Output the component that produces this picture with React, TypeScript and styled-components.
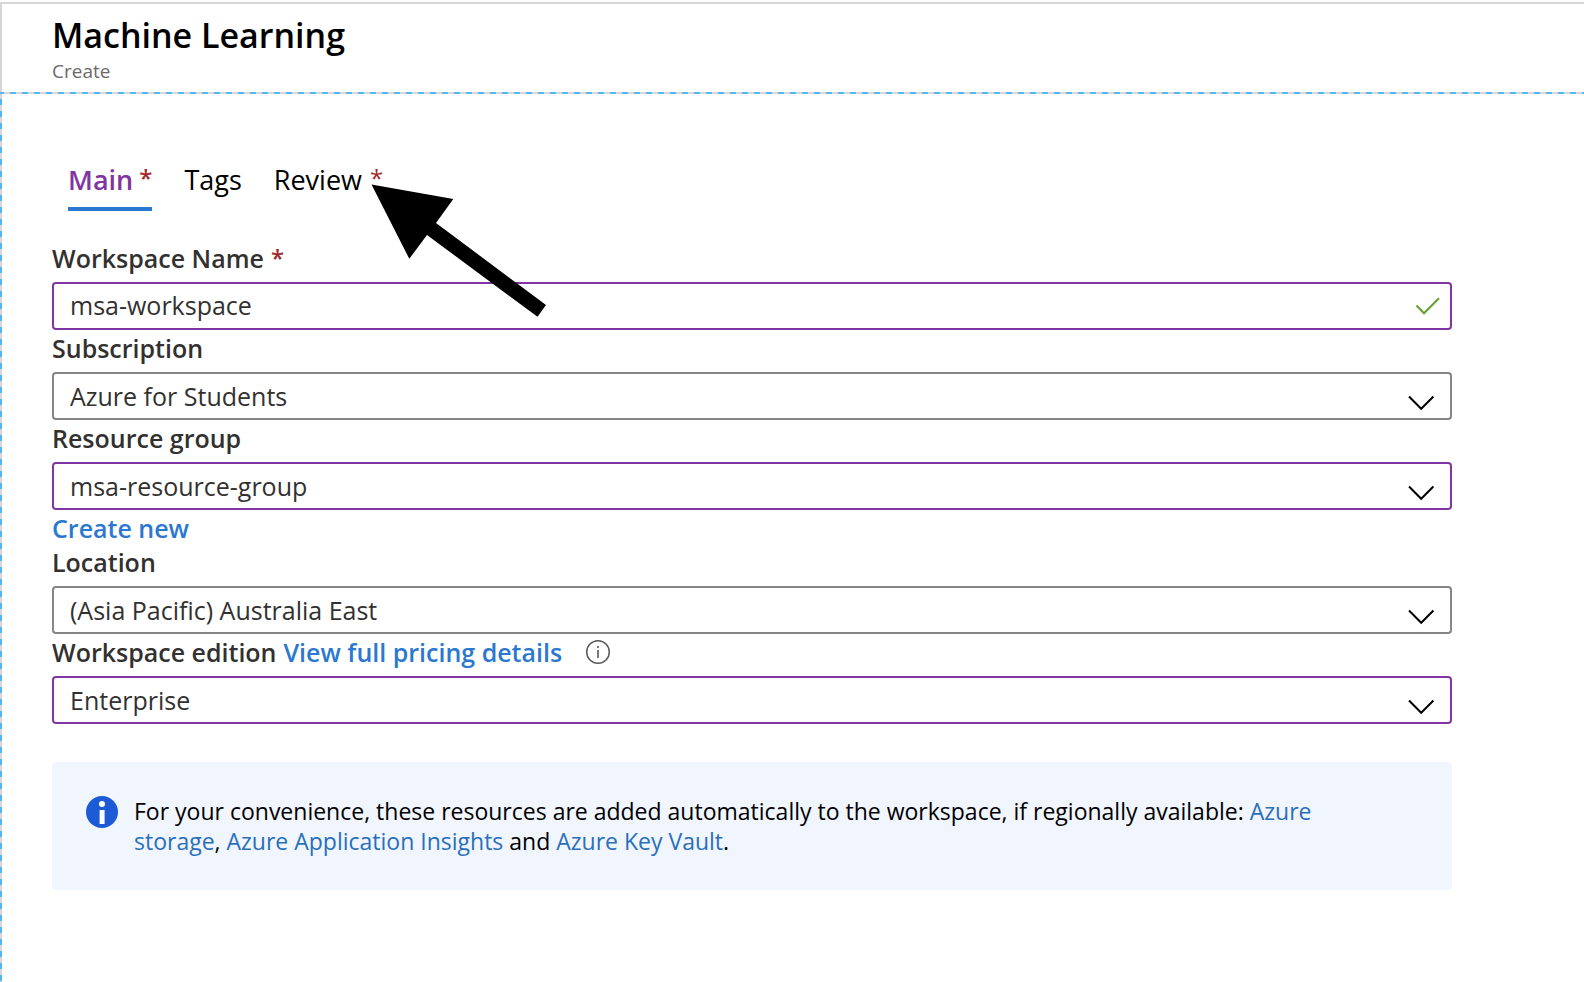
import React from "react";
import styled, { createGlobalStyle } from "styled-components";

const color = {
  ink: "#000000",
  label: "#323130",
  muted: "#6b6a69",
  accent: "#8035a3",
  link: "#2b78d0",
  noticeLink: "#2a6fba",
  required: "#a02b2f",
  line: "#d6d6d6",
  dash: "#52b9ee",
  field: "#868686",
  notice: "#f0f5fe",
  info: "#1d5bd6",
  valid: "#62a22c",
};

const GlobalStyle = createGlobalStyle`
  *, *::before, *::after { box-sizing: border-box; }
  body {
    margin: 0;
    background: #ffffff;
    color: ${color.ink};
    font-family: "Open Sans", "Noto Sans", sans-serif;
  }
`;

const Page = styled.div`
  display: flex;
  flex-direction: column;
  min-height: 100vh;
  padding-top: 2px;
`;

const Header = styled.header`
  height: 90px;
  padding: 8px 50px 0;
  border-top: 2px solid ${color.line};
  border-left: 2px solid ${color.line};
`;

const Title = styled.h1`
  margin: 0;
  font-size: 34px;
  font-weight: 600;
  line-height: 46px;
`;

const Subtitle = styled.p`
  margin: 0;
  color: ${color.muted};
  font-size: 19px;
  line-height: 26px;
`;

const Content = styled.main`
  flex: 1;
  padding: 66px 132px 40px 52px;
  background:
    repeating-linear-gradient(to right, ${color.dash} 0 6px, ${color.line} 6px 12px) -2px 0 / calc(100% + 12px) 2px no-repeat,
    repeating-linear-gradient(to bottom, ${color.dash} 0 6px, ${color.line} 6px 12px) 0 -5px / 2px calc(100% + 12px) no-repeat;
`;

const Tabs = styled.div`
  display: flex;
  gap: 32px;
  padding: 0 16px;
`;

const Tab = styled.button<{ $active?: boolean }>`
  display: flex;
  gap: ${(p) => (p.$active ? 6 : 8)}px;
  height: 53px;
  padding: 4px 0 0;
  border: 0;
  border-bottom: 4px solid ${(p) => (p.$active ? color.link : "transparent")};
  background: none;
  color: ${(p) => (p.$active ? color.accent : color.ink)};
  font-family: inherit;
  font-size: 27px;
  font-weight: ${(p) => (p.$active ? 600 : 400)};
  line-height: 36px;
`;

const Required = styled.span`
  color: ${color.required};
  font-size: 24px;
  line-height: 32px;
`;

const Form = styled.form`
  display: flex;
  flex-direction: column;
  padding-top: 29px;
`;

const LabelRow = styled.div`
  display: flex;
  align-items: center;
  gap: 7px;
  height: 42px;
  padding-bottom: 6px;
  color: ${color.label};
  font-size: 25px;
  font-weight: 600;
  line-height: 34px;
`;

const ActionRow = styled.div`
  display: flex;
  align-items: flex-end;
  height: 34px;
`;

const TextLink = styled.a`
  color: ${color.link};
  font-size: 25px;
  font-weight: 600;
  line-height: 32px;
  text-decoration: none;
`;

const InfoButton = styled.button`
  display: flex;
  margin-left: 16px;
  padding: 0;
  border: 0;
  background: none;
`;

const Control = styled.div`
  position: relative;
  display: flex;
`;

const fieldStyle = (changed?: boolean) => `
  width: 100%;
  height: 48px;
  padding: 0 56px 0 16px;
  border: 2px solid ${changed ? color.accent : color.field};
  border-radius: 4px;
  outline: 0;
  background: #ffffff;
  color: ${color.label};
  font-family: inherit;
  font-size: 25px;
  line-height: 34px;
`;

const Input = styled.input<{ $changed?: boolean }>`
  ${(p) => fieldStyle(p.$changed)}
  padding-bottom: 3px;
`;

const Select = styled.select<{ $changed?: boolean }>`
  ${(p) => fieldStyle(p.$changed)}
  appearance: none;
`;

const ControlIcon = styled.svg`
  position: absolute;
  top: 0;
  right: 8px;
  width: 40px;
  height: 48px;
  fill: none;
  pointer-events: none;
`;

const Notice = styled.aside`
  display: flex;
  gap: 16px;
  min-height: 128px;
  margin-top: 38px;
  padding: 34px 80px 34px 34px;
  border-radius: 4px;
  background: ${color.notice};
`;

const NoticeIcon = styled.svg`
  flex: none;
  width: 32px;
  height: 32px;
`;

const NoticeText = styled.p`
  margin: 0;
  font-size: 23px;
  line-height: 30px;
`;

const NoticeLink = styled.a`
  color: ${color.noticeLink};
  text-decoration: none;
`;

const Pointer = styled.svg`
  position: absolute;
  top: 180px;
  left: 368px;
  width: 182px;
  height: 140px;
  pointer-events: none;
`;

type DropdownProps = { id: string; label: string; value: string; changed?: boolean; extra?: React.ReactNode };

function Dropdown({ id, label, value, changed, extra }: DropdownProps) {
  return (
    <div>
      <LabelRow>
        <label htmlFor={id}>{label}</label>
        {extra}
      </LabelRow>
      <Control>
        <Select id={id} $changed={changed} defaultValue={value}>
          <option>{value}</option>
        </Select>
        <ControlIcon viewBox="0 0 40 48" aria-hidden="true">
          <path d="M5 24.5 17.2 36.8 29.4 24.5" stroke="#000" strokeWidth="2" />
        </ControlIcon>
      </Control>
    </div>
  );
}

export default function App() {
  return (
    <Page>
      <GlobalStyle />
      <Header>
        <Title>Machine Learning</Title>
        <Subtitle>Create</Subtitle>
      </Header>
      <Content>
        <Tabs role="tablist">
          <Tab role="tab" aria-selected="true" $active>
            Main <Required>*</Required>
          </Tab>
          <Tab role="tab" aria-selected="false">Tags</Tab>
          <Tab role="tab" aria-selected="false">
            Review <Required>*</Required>
          </Tab>
        </Tabs>
        <Form onSubmit={(e) => e.preventDefault()}>
          <div>
            <LabelRow>
              <label htmlFor="name">Workspace Name</label>
              <Required>*</Required>
            </LabelRow>
            <Control>
              <Input id="name" type="text" defaultValue="msa-workspace" spellCheck={false} $changed />
              <ControlIcon viewBox="0 0 40 48" aria-hidden="true">
                <path d="M12.5 23.5 20 31.3 35 16.3" stroke={color.valid} strokeWidth="2" />
              </ControlIcon>
            </Control>
          </div>
          <Dropdown id="subscription" label="Subscription" value="Azure for Students" />
          <Dropdown id="group" label="Resource group" value="msa-resource-group" changed />
          <ActionRow>
            <TextLink href="#create">Create new</TextLink>
          </ActionRow>
          <Dropdown id="location" label="Location" value="(Asia Pacific) Australia East" />
          <Dropdown
            id="edition"
            label="Workspace edition"
            value="Enterprise"
            changed
            extra={
              <>
                <TextLink href="#pricing">View full pricing details</TextLink>
                <InfoButton type="button" aria-label="About workspace editions">
                  <svg width="26" height="26" viewBox="0 0 26 26" fill="none" stroke="#5c5b5a">
                    <circle cx="13" cy="13" r="11.3" strokeWidth="1.5" />
                    <path d="M13 11v8M13 7v2" strokeWidth="1.6" />
                  </svg>
                </InfoButton>
              </>
            }
          />
        </Form>
        <Notice>
          <NoticeIcon viewBox="0 0 32 32" aria-hidden="true">
            <circle cx="16" cy="16" r="16" fill={color.info} />
            <circle cx="16" cy="8" r="3" fill="#fff" />
            <path d="M13.6 14h5v14h-5z" fill="#fff" />
          </NoticeIcon>
          <NoticeText>
            For your convenience, these resources are added automatically to the workspace, if regionally
            available: <NoticeLink href="#storage">Azure storage</NoticeLink>,{" "}
            <NoticeLink href="#insights">Azure Application Insights</NoticeLink> and{" "}
            <NoticeLink href="#vault">Azure Key Vault</NoticeLink>.
          </NoticeText>
        </Notice>
      </Content>
      <Pointer viewBox="368 180 182 140" aria-hidden="true">
        <path d="M371.5 184.5 453.3 199 436 223 546 305 537.5 316.8 427 235 409.3 258.8Z" fill="#000" />
      </Pointer>
    </Page>
  );
}
